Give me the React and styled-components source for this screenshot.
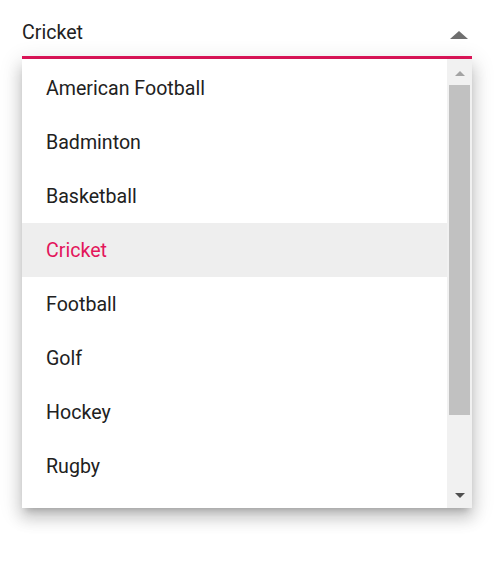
import React from "react";
import styled, { createGlobalStyle } from "styled-components";

const sports = [
  "American Football",
  "Badminton",
  "Basketball",
  "Cricket",
  "Football",
  "Golf",
  "Hockey",
  "Rugby",
];

const selected = "Cricket";

const GlobalStyle = createGlobalStyle`
  html, body {
    margin: 0;
    padding: 0;
    background: #ffffff;
  }
  body {
    font-family: Roboto, "Liberation Sans", sans-serif;
    width: 504px;
    height: 567px;
    overflow: hidden;
  }
`;

const Page = styled.div`
  padding: 0 32px 0 22px;
`;

const Field = styled.div`
  display: flex;
  align-items: center;
  justify-content: space-between;
  height: 35px;
  padding-top: 21px;
  border-bottom: 3px solid #e3165b;
  box-sizing: content-box;
`;

const Value = styled.span`
  font-size: 19.6px;
  line-height: 24px;
  color: #212121;
  align-self: flex-start;
`;

const Caret = styled.span`
  width: 0;
  height: 0;
  margin-right: 4px;
  margin-bottom: 17px;
  align-self: flex-end;
  border-left: 9px solid transparent;
  border-right: 9px solid transparent;
  border-bottom: 8px solid #6f6f6f;
`;

const Popup = styled.div`
  display: flex;
  height: 449px;
  background: #ffffff;
  box-shadow: 0 6px 7px -4px rgba(0, 0, 0, 0.2), 0 10px 14px 1px rgba(0, 0, 0, 0.14),
    0 4px 20px 3px rgba(0, 0, 0, 0.12);
  overflow: hidden;
`;

const List = styled.ul`
  flex: 1;
  margin: 0;
  padding: 2px 0 0;
  list-style: none;
  overflow: hidden;
`;

const Item = styled.li`
  height: 54px;
  display: flex;
  align-items: center;
  padding: 0 24px;
  font-size: 19.6px;
  color: ${(p) => (p.$active ? "#e3165b" : "#212121")};
  background: ${(p) => (p.$active ? "#eeeeee" : "transparent")};
`;

const Scrollbar = styled.div`
  width: 25px;
  display: flex;
  flex-direction: column;
  align-items: center;
  background: #f1f1f1;
`;

const ArrowButton = styled.div`
  height: 26px;
  width: 100%;
  display: flex;
  align-items: center;
  justify-content: center;
`;

const Arrow = styled.span`
  width: 0;
  height: 0;
  border-left: 5.5px solid transparent;
  border-right: 5.5px solid transparent;
  ${(p) =>
    p.$up
      ? `border-bottom: 5px solid #a3a3a3; margin-top: 3px;`
      : `border-top: 5px solid #505050; margin-top: 1px;`}
`;

const Thumb = styled.div`
  width: 21px;
  height: 330px;
  margin-left: -1px;
  background: #c1c1c1;
`;

const Spacer = styled.div`
  flex: 1;
`;

export default function App() {
  return (
    <>
      <GlobalStyle />
      <Page>
        <Field>
          <Value>{selected}</Value>
          <Caret />
        </Field>
        <Popup>
          <List>
            {sports.map((s) => (
              <Item key={s} $active={s === selected}>
                {s}
              </Item>
            ))}
          </List>
          <Scrollbar>
            <ArrowButton>
              <Arrow $up />
            </ArrowButton>
            <Thumb />
            <Spacer />
            <ArrowButton>
              <Arrow />
            </ArrowButton>
          </Scrollbar>
        </Popup>
      </Page>
    </>
  );
}
